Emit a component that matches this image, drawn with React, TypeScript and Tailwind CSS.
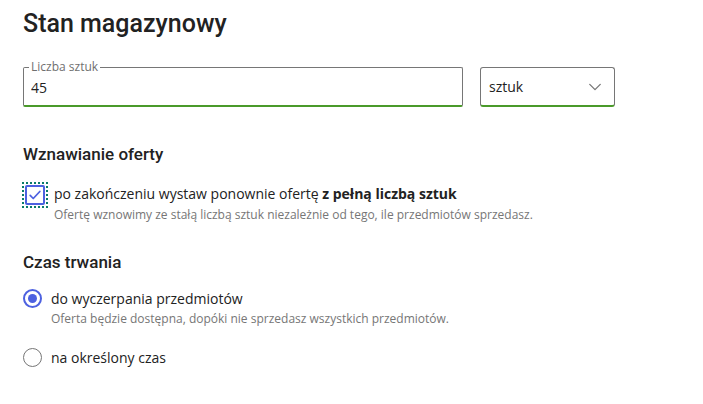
import React, { useState } from "react";

const heading = { fontFamily: "Roboto, 'Open Sans', sans-serif" };

function Checkbox({ checked }: { checked: boolean }) {
  return (
    <span className="flex h-[24px] w-[24px] shrink-0 items-center justify-center outline-dotted outline-2 outline-[#0b7b6b] -outline-offset-1">
      <span
        className={`flex h-[20px] w-[20px] items-center justify-center rounded-[2px] border-2 ${
          checked ? "border-[#4d61e0]" : "border-[#767676]"
        }`}
      >
        {checked && (
          <svg viewBox="0 0 16 16" className="h-[14px] w-[14px]" fill="none">
            <path
              d="M2.5 8.5l3.5 3.5 7.5-8"
              stroke="#4d61e0"
              strokeWidth="2"
              strokeLinecap="round"
              strokeLinejoin="round"
            />
          </svg>
        )}
      </span>
    </span>
  );
}

function Radio({ checked }: { checked: boolean }) {
  return (
    <span
      className={`flex h-[19px] w-[19px] shrink-0 items-center justify-center rounded-full border-2 ${
        checked ? "border-[#4d61e0]" : "border-[#767676] border-[1.5px]"
      }`}
    >
      {checked && <span className="h-[9px] w-[9px] rounded-full bg-[#4d61e0]" />}
    </span>
  );
}

export default function App() {
  const [duration, setDuration] = useState<"stock" | "fixed">("stock");

  return (
    <div
      className="h-[404px] w-[703px] bg-white px-[23px] pt-[7px] text-[#222222]"
      style={{ fontFamily: "'Open Sans', sans-serif" }}
    >
      <h1 className="text-[25px] font-medium leading-[34px]" style={heading}>
        Stan magazynowy
      </h1>

      <div className="mt-[26px] flex gap-[17px]">
        <div className="relative h-[40px] w-[440px] rounded-[2px] border border-b-2 border-[#767676] border-b-[#4a9a2a]">
          <span className="absolute -top-[9px] left-[5px] bg-white px-[2px] text-[12px] leading-[16px] text-[#6f6f6f]">
            Liczba sztuk
          </span>
          <input
            className="h-full w-full bg-transparent px-[7px] pt-[2px] text-[14px] text-[#222222] outline-none"
            defaultValue="45"
          />
        </div>

        <div className="flex h-[40px] w-[135px] items-center justify-between rounded-[3px] border border-b-2 border-[#767676] border-b-[#4a9a2a] pl-[8px] pr-[12px]">
          <span className="text-[14px]">sztuk</span>
          <svg viewBox="0 0 16 16" className="h-[14px] w-[14px]" fill="none">
            <path
              d="M2 5l6 6 6-6"
              stroke="#767676"
              strokeWidth="1.5"
              strokeLinecap="round"
              strokeLinejoin="round"
            />
          </svg>
        </div>
      </div>

      <h2 className="mt-[35px] text-[17px] font-medium leading-[24px]" style={heading}>
        Wznawianie oferty
      </h2>

      <div className="mt-[17px] flex items-start gap-[7px]">
        <Checkbox checked />
        <div className="pt-[1px]">
          <p className="text-[14px] leading-[20px]">
            po zakończeniu wystaw ponownie ofertę <b className="font-bold">z pełną liczbą sztuk</b>
          </p>
          <p className="mt-[3px] text-[12px] leading-[16px] text-[#767676]">
            Ofertę wznowimy ze stałą liczbą sztuk niezależnie od tego, ile przedmiotów sprzedasz.
          </p>
        </div>
      </div>

      <h2 className="mt-[27px] text-[17px] font-medium leading-[24px]" style={heading}>
        Czas trwania
      </h2>

      <div className="mt-[15px] flex flex-col gap-[21px]">
        <label className="flex cursor-pointer items-start gap-[9px]" onClick={() => setDuration("stock")}>
          <Radio checked={duration === "stock"} />
          <div>
            <p className="text-[14px] leading-[20px]">do wyczerpania przedmiotów</p>
            <p className="mt-[2px] text-[12px] leading-[16px] text-[#767676]">
              Oferta będzie dostępna, dopóki nie sprzedasz wszystkich przedmiotów.
            </p>
          </div>
        </label>
        <label className="flex cursor-pointer items-start gap-[9px]" onClick={() => setDuration("fixed")}>
          <Radio checked={duration === "fixed"} />
          <p className="text-[14px] leading-[20px]">na określony czas</p>
        </label>
      </div>
    </div>
  );
}
